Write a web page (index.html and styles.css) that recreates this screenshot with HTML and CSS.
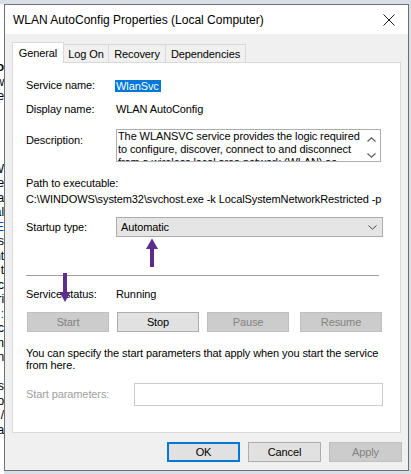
FILE: index.html
```html
<!DOCTYPE html>
<html>
<head>
<meta charset="utf-8">
<link rel="stylesheet" href="styles.css">
</head>
<body>
<div class="bgleft">
  <div class="bl bold">Mo</div>
  <div class="bl">w</div>
  <div class="bl">ce</div>
  <div class="bl">&nbsp;</div>
  <div class="bl">&nbsp;</div>
  <div class="bl">&nbsp;</div>
  <div class="bl">&nbsp;</div>
  <div class="bl">W</div>
  <div class="bl">e</div>
  <div class="bl">a</div>
  <div class="bl">al</div>
  <div class="bl blue">E</div>
  <div class="bl">s</div>
  <div class="bl">nt</div>
  <div class="bl">t</div>
  <div class="bl">c</div>
  <div class="bl">ri</div>
  <div class="bl blue">:</div>
  <div class="bl">c</div>
  <div class="bl">m</div>
  <div class="bl">n</div>
  <div class="bl">&nbsp;</div>
  <div class="bl">rs</div>
  <div class="bl">o</div>
  <div class="bl">/</div>
  <div class="bl">a</div>
</div>
<div class="window">
  <div class="titlebar">
    <span class="title">WLAN AutoConfig Properties (Local Computer)</span>
    <svg class="close" viewBox="0 0 12 12" width="12" height="12"><path d="M0.5 0.5 L11.5 11.5 M11.5 0.5 L0.5 11.5" stroke="#1a1a1a" stroke-width="1" fill="none"/></svg>
  </div>
  <div class="content">
    <div class="tabs">
      <div class="tab active t-general">General</div>
      <div class="tab t-logon">Log On</div>
      <div class="tab t-recovery">Recovery</div>
      <div class="tab t-deps">Dependencies</div>
    </div>
    <div class="panel">
      <div class="row r-name"><span class="label">Service name:</span><span class="sel">WlanSvc</span></div>
      <div class="row r-display"><span class="label">Display name:</span><span>WLAN AutoConfig</span></div>
      <div class="row r-desc">
        <span class="label desc-label">Description:</span>
        <div class="descbox">
          <div class="desctext">The WLANSVC service provides the logic required<br>to configure, discover, connect to and disconnect<br>from a wireless local area network (WLAN) as<br>defined by IEEE 802.11 standards.</div>
          <div class="scroll">
            <svg viewBox="0 0 9 5" width="9" height="5"><polyline points="0.5,4.5 4.5,0.8 8.5,4.5" stroke="#606060" stroke-width="1.2" fill="none"/></svg>
            <svg viewBox="0 0 9 5" width="9" height="5"><polyline points="0.5,0.5 4.5,4.2 8.5,0.5" stroke="#606060" stroke-width="1.2" fill="none"/></svg>
          </div>
        </div>
      </div>
      <div class="path">
        <div>Path to executable:</div>
        <div>C:\WINDOWS\system32\svchost.exe -k LocalSystemNetworkRestricted -p</div>
      </div>
      <div class="row r-startup">
        <span class="label">Startup type:</span>
        <div class="dropdown">
          <span>Automatic</span>
          <svg viewBox="0 0 9 5" width="9" height="5"><polyline points="0.5,0.5 4.5,4.2 8.5,0.5" stroke="#444" stroke-width="1" fill="none"/></svg>
        </div>
      </div>
      <div class="sep"></div>
      <div class="row r-status"><span class="label">Service status:</span><span>Running</span></div>
      <div class="svcbtns">
        <div class="btn disabled b-start">Start</div>
        <div class="btn b-stop">Stop</div>
        <div class="btn disabled b-pause">Pause</div>
        <div class="btn disabled b-resume">Resume</div>
      </div>
      <p class="para">You can specify the start parameters that apply when you start the service<br>from here.</p>
      <div class="row r-params">
        <span class="label params-label">Start parameters:</span>
        <div class="input"></div>
      </div>
    </div>
    <div class="footer">
      <div class="btn fbtn default">OK</div>
      <div class="btn fbtn">Cancel</div>
      <div class="btn fbtn disabled">Apply</div>
    </div>
  </div>
</div>
<svg class="arrows" viewBox="0 0 411 474" width="411" height="474">
  <path d="M150 247 L154 247 L154 267 L150 267 Z" fill="#5c2d8c"/>
  <path d="M146 249 L152 238.5 L158 249 Z" fill="#5c2d8c"/>
  <path d="M63 273 L67 273 L67 293 L63 293 Z" fill="#5c2d8c"/>
  <path d="M59.5 292 L65 302 L70.5 292 Z" fill="#5c2d8c"/>
</svg>
</body>
</html>
```

FILE: styles.css
```css
* { box-sizing: border-box; }
html, body { margin: 0; padding: 0; }
body {
  width: 411px;
  height: 474px;
  overflow: hidden;
  background: #d9dfe6;
  display: flex;
  align-items: flex-start;
  padding-top: 4px;
  font-family: "Liberation Sans", Arial, sans-serif;
  font-size: 11px;
  letter-spacing: -0.1px;
  color: #000;
  position: relative;
}
.bgleft {
  width: 4px;
  height: 470px;
  overflow: hidden;
  background: #fff;
  padding-top: 56px;
}
.bl {
  direction: rtl;
  white-space: nowrap;
  line-height: 14.5px;
  font-size: 12px;
  width: 4px;
  overflow: hidden;
}
.bl.bold { font-weight: bold; }
.bl.blue { color: #1c3fa8; }
.window {
  width: 405px;
  height: 467px;
  border: 1px solid #707070;
  display: flex;
  flex-direction: column;
  background: #f0f0f0;
}
.titlebar {
  height: 29px;
  flex: none;
  background: #fff;
  display: flex;
  align-items: center;
  justify-content: space-between;
  padding: 0 13px 0 8px;
}
.title {
  font-size: 12px;
  letter-spacing: 0;
  color: #000;
}
.close { display: block; }
.content {
  flex: 1;
  padding: 8px 7px 0 7px;
  display: flex;
  flex-direction: column;
}
.tabs {
  display: flex;
  align-items: flex-end;
  height: 20px;
  flex: none;
}
.tab {
  height: 18px;
  border-top: 1px solid #d9d9d9;
  border-right: 1px solid #d9d9d9;
  display: flex;
  align-items: center;
  justify-content: center;
  background: #f0f0f0;
  padding-top: 1px;
}
.tab.active {
  height: 21px;
  margin-bottom: -1px;
  border-left: 1px solid #d9d9d9;
  background: #fff;
  position: relative;
  z-index: 1;
  padding-top: 0;
  padding-bottom: 1px;
}
.t-general { width: 52px; }
.t-logon { width: 45px; }
.t-recovery { width: 57px; }
.t-deps { width: 80px; }
.panel {
  height: 371px;
  flex: none;
  border: 1px solid #d9d9d9;
  background: #fff;
  padding: 16px 0 0 13px;
  display: flex;
  flex-direction: column;
}
.row {
  display: flex;
  align-items: center;
  line-height: 13px;
}
.label {
  width: 90px;
  flex: none;
}
.sel {
  display: inline-block;
  line-height: 12px;
  height: 12px;
  background: #0078d7;
  color: #fff;
  padding: 0 2px 0 1px;
  margin-left: -1px;
}
.r-name { height: 13px; }
.r-display { margin-top: 11px; }
.r-desc { margin-top: 13px; align-items: flex-start; }
.desc-label { padding-top: 5px; }
.descbox {
  width: 265px;
  height: 33px;
  border: 1px solid #abadb3;
  display: flex;
  overflow: hidden;
}
.desctext {
  flex: 1;
  padding: 0 0 0 1px;
  line-height: 13px;
  white-space: nowrap;
  overflow: hidden;
}
.scroll {
  width: 17px;
  flex: none;
  display: flex;
  flex-direction: column;
  align-items: center;
  justify-content: space-between;
  padding: 7px 1px 3px 0;
}
.scroll svg { display: block; }
.path {
  margin-top: 13px;
  line-height: 16px;
}
.r-startup { margin-top: 10px; }
.dropdown {
  width: 267px;
  height: 20px;
  background: #e5e5e5;
  border: 1px solid #acacac;
  display: flex;
  align-items: center;
  justify-content: space-between;
  padding: 0 5px 0 4px;
}
.dropdown svg { display: block; }
.sep {
  margin-top: 38px;
  width: 353px;
  height: 1px;
  background: #a0a0a0;
}
.r-status { margin-top: 12px; }
.svcbtns {
  margin-top: 11px;
  display: flex;
  padding-left: 1px;
}
.btn {
  height: 20px;
  border: 1px solid #adadad;
  background: #e1e1e1;
  display: flex;
  align-items: center;
  justify-content: center;
  color: #000;
}
.btn.disabled {
  background: #cccccc;
  border-color: #bfbfbf;
  color: #838383;
}
.svcbtns .btn { width: 82px; }
.b-stop { margin-left: 8px; }
.b-pause { margin-left: 8px; }
.b-resume { margin-left: 11px; }
.para {
  margin: 15px 0 0 0;
  line-height: 12px;
}
.r-params { margin-top: 12px; }
.params-label {
  width: 108px;
  color: #a0a0a0;
}
.input {
  width: 249px;
  height: 23px;
  border: 1px solid #cccccc;
  background: #fff;
}
.footer {
  margin-top: 9px;
  margin-right: -1px;
  display: flex;
  justify-content: flex-end;
  gap: 8px;
}
.fbtn { width: 73px; }
.btn.default {
  border: 2px solid #0078d7;
}
.arrows {
  position: absolute;
  left: 0;
  top: 0;
  pointer-events: none;
}
```
